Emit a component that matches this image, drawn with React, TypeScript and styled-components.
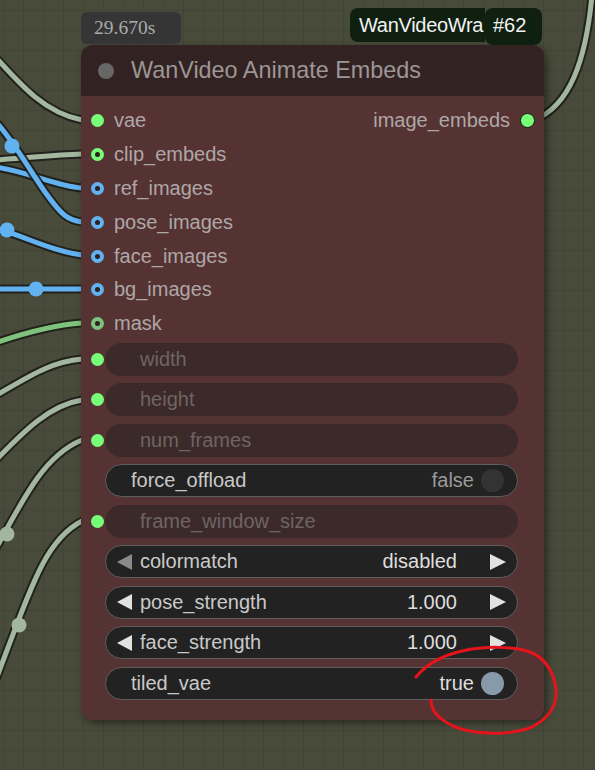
import React from "react";
import styled, { createGlobalStyle } from "styled-components";

const GlobalStyle = createGlobalStyle`
  html, body {
    margin: 0;
    padding: 0;
    background: #484a3a;
  }
  * {
    box-sizing: border-box;
  }
`;

const SANS = `"Liberation Sans", Arial, sans-serif`;

const Canvas = styled.div`
  position: relative;
  width: 595px;
  height: 770px;
  overflow: hidden;
  background-color: #494b3a;
  background-image: linear-gradient(to right, rgba(0, 0, 0, 0.09) 1px, transparent 1px),
    linear-gradient(to bottom, rgba(0, 0, 0, 0.09) 1px, transparent 1px);
  background-size: 20px 20px;
  background-position: 3px 10px;
  font-family: ${SANS};
`;

const Overlay = styled.svg`
  position: absolute;
  left: 0;
  top: 0;
  pointer-events: none;
`;

const Node = styled.div`
  position: absolute;
  left: 81px;
  top: 45px;
  width: 463px;
  background: #553333;
  border-radius: 12px;
  box-shadow: 3px 3px 8px rgba(0, 0, 0, 0.45);
  display: flex;
  flex-direction: column;
`;

const TimerBadge = styled.div`
  position: absolute;
  left: 0;
  top: -33px;
  width: 100px;
  height: 32px;
  border-radius: 6px;
  background: #353535;
  color: #ababab;
  font-family: "Liberation Serif", "Times New Roman", serif;
  font-size: 19.5px;
  display: flex;
  align-items: center;
  padding-left: 13px;
`;

const TitleBadge = styled.div`
  position: absolute;
  left: 269px;
  top: -37px;
  display: flex;
  align-items: flex-start;
  font-size: 20px;
  color: #f2f2f2;
`;

const NameChip = styled.div`
  width: 135px;
  height: 34px;
  background: #0f1f10;
  border-radius: 8px 0 0 8px;
  padding-left: 9px;
  white-space: nowrap;
  letter-spacing: -0.3px;
  display: flex;
  align-items: center;
`;

const IdChip = styled.div`
  width: 57px;
  height: 37px;
  background: #0f1f10;
  border-radius: 8px;
  padding-left: 8px;
  padding-bottom: 3px;
  display: flex;
  align-items: center;
`;

const TitleBar = styled.div`
  height: 51px;
  background: #332222;
  border-radius: 12px 12px 0 0;
  display: flex;
  align-items: center;
  gap: 17px;
  padding-left: 17px;
`;

const TitleDot = styled.span`
  width: 16px;
  height: 16px;
  border-radius: 50%;
  background: #676767;
`;

const Title = styled.span`
  font-size: 23.4px;
  color: #9c9696;
  white-space: nowrap;
`;

const Body = styled.div`
  padding: 8px 0 20px;
  display: flex;
  flex-direction: column;
`;

const SlotRow = styled.div`
  height: 33.8px;
  display: flex;
  align-items: center;
  justify-content: space-between;
  padding: 0 9px 0 10px;
`;

const Slot = styled.div`
  display: flex;
  align-items: center;
  gap: 10px;
  font-size: 20px;
  color: #aea7a7;
  white-space: nowrap;
`;

const Dot = styled.span<{ $color: string; $ring?: boolean }>`
  width: 13px;
  height: 13px;
  flex: none;
  border-radius: 50%;
  background: ${(p) => (p.$ring ? "#2c2020" : p.$color)};
  border: ${(p) => (p.$ring ? `4px solid ${p.$color}` : "none")};
`;

const OutDot = styled.span`
  width: 15px;
  height: 15px;
  border-radius: 50%;
  background: #77ff77;
  border: 1.5px solid #161616;
`;

const Widgets = styled.div`
  margin-top: 2.4px;
  display: flex;
  flex-direction: column;
  gap: 7.5px;
`;

const WidgetRow = styled.div`
  display: flex;
  align-items: center;
  gap: 1px;
  padding: 0 26px 0 10px;
`;

const Spacer = styled.span`
  width: 13px;
  flex: none;
`;

const Pill = styled.div<{ $converted?: boolean }>`
  flex: 1;
  height: 33px;
  border-radius: 16.5px;
  display: flex;
  align-items: center;
  font-size: 20px;
  white-space: nowrap;
  background: ${(p) => (p.$converted ? "#3c2a2a" : "#222222")};
  border: ${(p) => (p.$converted ? "none" : "1px solid #5f5f5f")};
`;

const ConvertedLabel = styled.span`
  padding-left: 35px;
  color: #6f6464;
`;

const Label = styled.span<{ $pad: number }>`
  padding-left: ${(p) => p.$pad}px;
  color: #c9c9c9;
  flex: 1;
`;

const Value = styled.span<{ $dim?: boolean }>`
  color: ${(p) => (p.$dim ? "#9a9a9a" : "#dedede")};
`;

const Knob = styled.span<{ $on?: boolean }>`
  width: 23px;
  height: 23px;
  border-radius: 50%;
  margin: 0 13px 0 7px;
  background: ${(p) => (p.$on ? "#8899aa" : "#333333")};
`;

const ArrowBox = styled.svg<{ $side: "left" | "right" }>`
  flex: none;
  margin: ${(p) => (p.$side === "left" ? "0 8px 0 11px" : "0 11px 0 33px")};
`;

function Arrow({ side, dim }: { side: "left" | "right"; dim?: boolean }) {
  const pts = side === "left" ? "15,0 15,16 0,8" : "0,0 0,16 16,8";
  const w = side === "left" ? 15 : 16;
  return (
    <ArrowBox $side={side} width={w} height="16" viewBox={`0 0 ${w} 16`}>
      <polygon points={pts} fill={dim ? "#8a8a8a" : "#e2e2e2"} />
    </ArrowBox>
  );
}

function Link({ d, color }: { d: string; color: string }) {
  return (
    <g fill="none" strokeLinecap="round">
      <path d={d} stroke="#1b1b16" strokeOpacity={0.85} strokeWidth={9} />
      <path d={d} stroke={color} strokeWidth={5} />
    </g>
  );
}

const GRAY = "#a2b6a0";
const BLUE = "#62b2f2";
const GREEN = "#7ec27e";

const links: { d: string; color: string }[] = [
  { d: "M -20 40 C 15 78, 40 112, 82 120", color: GRAY },
  { d: "M -5 160 C 30 158, 50 155, 82 154", color: GRAY },
  { d: "M -5 167 C 30 172, 55 186, 82 188", color: BLUE },
  { d: "M -6 120 C 12 138, 28 168, 45 192 S 68 220, 82 222", color: BLUE },
  { d: "M -12 226 C 20 234, 50 251, 82 255", color: BLUE },
  { d: "M -5 289 L 82 289", color: BLUE },
  { d: "M -5 343 C 30 331, 55 325, 82 323", color: GREEN },
  { d: "M -5 396 C 30 376, 50 362, 82 359", color: GRAY },
  { d: "M -5 461 C 25 430, 50 405, 82 400", color: GRAY },
  { d: "M -8 556 C 25 495, 45 455, 82 440", color: GRAY },
  { d: "M 82 521 C 45 540, 32 585, -5 682", color: GRAY },
  { d: "M 534 120 C 570 106, 586 60, 592 -5", color: GRAY },
];

const knots = [
  { x: 12, y: 146, color: BLUE },
  { x: 7, y: 230, color: BLUE },
  { x: 36, y: 289, color: BLUE },
  { x: 7, y: 534, color: GRAY },
  { x: 19, y: 625, color: GRAY },
];

const inputs = [
  { name: "vae", color: "#77ff77" },
  { name: "clip_embeds", color: "#77ff77", ring: true },
  { name: "ref_images", color: BLUE, ring: true },
  { name: "pose_images", color: BLUE, ring: true },
  { name: "face_images", color: BLUE, ring: true },
  { name: "bg_images", color: BLUE, ring: true },
  { name: "mask", color: GREEN, ring: true },
];

type Widget =
  | { kind: "converted"; name: string }
  | { kind: "toggle"; name: string; on: boolean }
  | { kind: "choice"; name: string; value: string; dimLeft?: boolean };

const widgets: Widget[] = [
  { kind: "converted", name: "width" },
  { kind: "converted", name: "height" },
  { kind: "converted", name: "num_frames" },
  { kind: "toggle", name: "force_offload", on: false },
  { kind: "converted", name: "frame_window_size" },
  { kind: "choice", name: "colormatch", value: "disabled", dimLeft: true },
  { kind: "choice", name: "pose_strength", value: "1.000" },
  { kind: "choice", name: "face_strength", value: "1.000" },
  { kind: "toggle", name: "tiled_vae", on: true },
];

function WidgetPill({ w }: { w: Widget }) {
  if (w.kind === "converted") {
    return (
      <Pill $converted>
        <ConvertedLabel>{w.name}</ConvertedLabel>
      </Pill>
    );
  }
  if (w.kind === "toggle") {
    return (
      <Pill>
        <Label $pad={25}>{w.name}</Label>
        <Value $dim={!w.on}>{w.on ? "true" : "false"}</Value>
        <Knob $on={w.on} />
      </Pill>
    );
  }
  return (
    <Pill>
      <Arrow side="left" dim={w.dimLeft} />
      <Label $pad={0}>{w.name}</Label>
      <Value>{w.value}</Value>
      <Arrow side="right" />
    </Pill>
  );
}

export default function App() {
  return (
    <Canvas>
      <GlobalStyle />
      <Overlay width="595" height="770" viewBox="0 0 595 770">
        {links.map((l, i) => (
          <Link key={i} d={l.d} color={l.color} />
        ))}
        {knots.map((k, i) => (
          <circle key={i} cx={k.x} cy={k.y} r={7.5} fill={k.color} />
        ))}
      </Overlay>

      <Node>
        <TimerBadge>29.670s</TimerBadge>
        <TitleBadge>
          <NameChip>WanVideoWra</NameChip>
          <IdChip>#62</IdChip>
        </TitleBadge>
        <TitleBar>
          <TitleDot />
          <Title>WanVideo Animate Embeds</Title>
        </TitleBar>
        <Body>
          {inputs.map((s, i) => (
            <SlotRow key={s.name}>
              <Slot>
                <Dot $color={s.color} $ring={s.ring} />
                {s.name}
              </Slot>
              {i === 0 && (
                <Slot>
                  image_embeds
                  <OutDot />
                </Slot>
              )}
            </SlotRow>
          ))}
          <Widgets>
            {widgets.map((w) => (
              <WidgetRow key={w.name}>
                {w.kind === "converted" ? <Dot $color="#77ff77" /> : <Spacer />}
                <WidgetPill w={w} />
              </WidgetRow>
            ))}
          </Widgets>
        </Body>
      </Node>

      <Overlay width="595" height="770" viewBox="0 0 595 770">
        <path
          d="M 416 677 C 425 666, 440 656, 462 651 C 485 646, 512 646, 530 652 C 545 658, 553 670, 556 688 C 558 705, 550 718, 530 728 C 510 735, 480 735, 458 728 C 440 721, 431 712, 431 700"
          fill="none"
          stroke="#e5141c"
          strokeWidth={3}
          strokeLinecap="round"
        />
      </Overlay>
    </Canvas>
  );
}
